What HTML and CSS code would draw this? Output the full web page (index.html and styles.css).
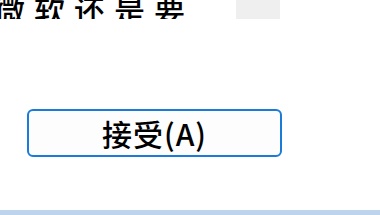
FILE: index.html
```html
<!DOCTYPE html>
<html lang="zh-CN">
<head>
<meta charset="UTF-8">
<meta name="viewport" content="width=device-width, initial-scale=1.0">
<title>接受</title>
<link rel="stylesheet" href="styles.css">
</head>
<body>

<div class="dialog">
    <!-- 顶部文字（被裁切） -->
    <div class="dialog-top">
        <span class="dialog-text">微软还是要</span>
        <span class="dialog-field"></span>
    </div>

    <!-- 按钮 -->
    <div class="dialog-actions">
        <button class="accept-btn" type="button">接受(A)</button>
    </div>

    <!-- 底部条 -->
    <div class="dialog-footer"></div>
</div>

</body>
</html>
```

FILE: styles.css
```css
html, body {
    margin: 0;
    padding: 0;
    background-color: #fff;
}

.dialog {
    width: 380px;
    height: 215px;
    display: flex;
    flex-direction: column;
    font-family: "Microsoft YaHei", "Noto Sans CJK SC", "Noto Sans", sans-serif;
    color: #000;
}

.dialog-top {
    height: 19px;
    display: flex;
    align-items: flex-end;
    overflow: hidden;
}

.dialog-text {
    font-size: 31px;
    line-height: 30px;
    font-weight: 500;
    letter-spacing: 9px;
    margin-left: -6px;
    margin-bottom: -5px;
    white-space: nowrap;
}

.dialog-field {
    width: 44px;
    height: 19px;
    margin-left: 42px;
    align-self: flex-start;
    background-color: #efefef;
}

.dialog-actions {
    padding: 90px 0 0 27px;
}

.accept-btn {
    width: 255px;
    height: 48px;
    padding: 0 0 1px;
    border: 2px solid #1a7bd8;
    border-radius: 6px;
    background-color: #fdfdfd;
    font-family: "Microsoft YaHei", "Noto Sans CJK SC", "Noto Sans", sans-serif;
    font-size: 30px;
    font-weight: 500;
    letter-spacing: 1px;
    color: #000;
}

.dialog-footer {
    margin-top: auto;
    height: 5px;
    background-color: #bcd4ec;
}
```
